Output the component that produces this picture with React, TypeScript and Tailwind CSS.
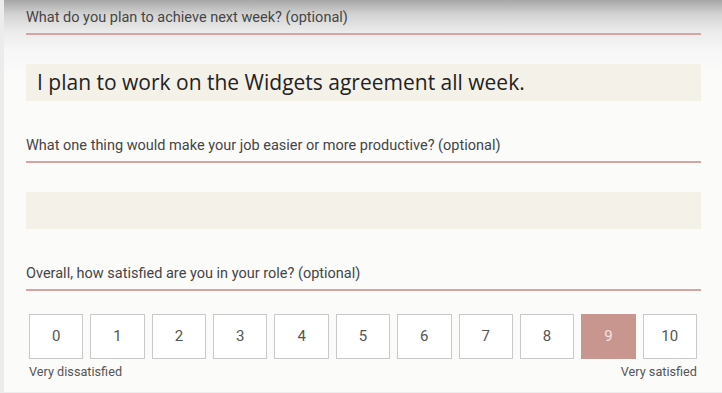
import React from 'react';

const Label = ({ children, className = '' }: { children: React.ReactNode; className?: string }) => (
  <div className={className}>
    <div className="h-4 text-[14.5px] leading-4 text-[#454545] font-['Roboto',sans-serif]">{children}</div>
    <div className="mt-[7px] h-[2px] w-full bg-[#d7a4a1]" />
  </div>
);

const App: React.FC = () => {
  const scores = [0, 1, 2, 3, 4, 5, 6, 7, 8, 9, 10];
  const selected = 9;

  return (
    <div className="w-[722px] h-[393px] overflow-hidden bg-[linear-gradient(to_bottom,#a6a6a6_0px,#d2d2d2_14px,#ececec_32px,#f7f7f7_52px,#fbfbfa_80px)]">
      <div className="h-full border-l-[4px] border-[#ececec] pl-[22px] pr-[21px] pt-[10px] border-b border-b-[#ededed]">
        {/* Next week */}
        <Label>What do you plan to achieve next week? (optional)</Label>
        <div className="mt-[29px] h-[37px] bg-[#f4f1e9] pl-[11px] pt-[1px] flex items-center text-[21px] text-[#222] font-['Open_Sans',sans-serif]">
          I plan to work on the Widgets agreement all week.
        </div>

        {/* Productivity */}
        <Label className="mt-[37px]">What one thing would make your job easier or more productive? (optional)</Label>
        <div className="mt-[29px] h-[37px] bg-[#f4f1e9]" />

        {/* Satisfaction */}
        <Label className="mt-[37px]">Overall, how satisfied are you in your role? (optional)</Label>
        <div className="mt-[23px] ml-[3px] mr-[4px]">
          <div className="flex gap-[7px]">
            {scores.map((n) => (
              <div
                key={n}
                className={
                  n === selected
                    ? 'flex-1 h-[45px] flex items-center justify-center bg-[#c8958f] border border-[#c8958f] text-[#f6e2de] text-[15px] font-["Roboto",sans-serif]'
                    : 'flex-1 h-[45px] flex items-center justify-center bg-white border border-[#c9c9c9] text-[#555] text-[15px] font-["Roboto",sans-serif]'
                }
              >
                {n}
              </div>
            ))}
          </div>
          <div className="mt-[6px] flex justify-between text-[12.7px] leading-[14px] text-[#555] font-['Roboto',sans-serif]">
            <span>Very dissatisfied</span>
            <span>Very satisfied</span>
          </div>
        </div>
      </div>
    </div>
  );
};

export default App;
